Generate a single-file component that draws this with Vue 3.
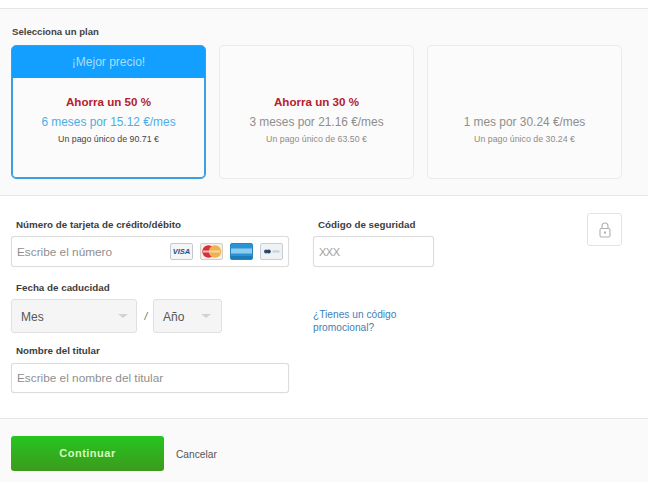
<script setup>
const plans = [
  { badge: '¡Mejor precio!', save: 'Ahorra un 50 %', price: '6 meses por 15.12 €/mes', once: 'Un pago único de 90.71 €', active: true },
  { badge: '', save: 'Ahorra un 30 %', price: '3 meses por 21.16 €/mes', once: 'Un pago único de 63.50 €', active: false },
  { badge: '', save: '', price: '1 mes por 30.24 €/mes', once: 'Un pago único de 30.24 €', active: false }
]
</script>

<template>
  <div class="page">
    <section class="plans">
      <h2 class="plans-title">Selecciona un plan</h2>
      <div class="plan-row">
        <article v-for="p in plans" :key="p.price" class="plan" :class="{ active: p.active }">
          <div class="plan-badge">{{ p.badge }}</div>
          <div class="plan-body">
            <div class="plan-save">{{ p.save }}</div>
            <div class="plan-price">{{ p.price }}</div>
            <div class="plan-once">{{ p.once }}</div>
          </div>
        </article>
      </div>
    </section>

    <section class="form">
      <div class="col-left">
        <label class="label">Número de tarjeta de crédito/débito</label>
        <div class="input card-input">
          <span class="ph">Escribe el número</span>
          <div class="cards">
            <svg class="cc" viewBox="0 0 23 17"><rect x=".5" y=".5" width="22" height="16" rx="1.5" fill="#f3f5f7" stroke="#c4c9ce"/><text x="11.5" y="11.2" text-anchor="middle" class="visa">VISA</text></svg>
            <svg class="cc" viewBox="0 0 23 17"><rect x=".5" y=".5" width="22" height="16" rx="1.5" fill="#f4efe8" stroke="#d2cdc6"/><circle cx="8.5" cy="8.5" r="6.2" fill="#d92f3c"/><circle cx="15" cy="8.5" r="6.2" fill="#efb24c"/><rect x="3" y="7.5" width="17" height="2" fill="#f6dccb" opacity=".85"/></svg>
            <svg class="cc" viewBox="0 0 23 17"><rect x=".5" y=".5" width="22" height="16" rx="1.5" fill="#2a94d6" stroke="#2a84bd"/><rect x="1" y="5.5" width="21" height="5" fill="#8fcdf0"/><rect x="1" y="13" width="21" height="3" fill="#1c7cb8"/></svg>
            <svg class="cc" viewBox="0 0 23 17"><rect x=".5" y=".5" width="22" height="16" rx="1.5" fill="#eff2f5" stroke="#c9ced3"/><circle cx="6" cy="8.5" r="2" fill="#2c4f78"/><circle cx="8.8" cy="8.5" r="2" fill="#26405f"/><rect x="12.5" y="7.4" width="7" height="2.2" fill="#c7cfd8"/></svg>
          </div>
        </div>
        <label class="label exp-label">Fecha de caducidad</label>
        <div class="exp-row">
          <div class="select month"><span>Mes</span><i class="caret"></i></div>
          <span class="slash">/</span>
          <div class="select year"><span>Año</span><i class="caret"></i></div>
        </div>
        <label class="label name-label">Nombre del titular</label>
        <div class="input name-input"><span class="ph">Escribe el nombre del titular</span></div>
      </div>
      <div class="col-mid">
        <label class="label">Código de seguridad</label>
        <div class="input cvv"><span class="ph xxx">XXX</span></div>
        <a class="promo">¿Tienes un código<br>promocional?</a>
      </div>
      <div class="lock">
        <svg width="12" height="16" viewBox="0 0 12 16" fill="none" stroke="#b0b0b0" stroke-width="1.1">
          <path d="M3 6.5V4a3 3 0 0 1 6 0v2.5"/>
          <rect x="1" y="6.5" width="10" height="8.5" rx="1.5"/>
          <path d="M6 9.5v2.2" stroke-width="1.8"/>
        </svg>
      </div>
    </section>

    <footer class="foot">
      <button class="go">Continuar</button>
      <a class="cancel">Cancelar</a>
    </footer>
  </div>
</template>

<style>
html, body { margin: 0; background: #fff; }
</style>

<style scoped>
.page { width: 648px; height: 490px; overflow: hidden; font-family: "Liberation Sans", Arial, sans-serif; background: #fff; padding-top: 8px; box-sizing: border-box; }
.plans { background: #fafafa; border-top: 1px solid #e6e6e6; border-bottom: 1px solid #e6e6e6; height: 188px; box-sizing: border-box; padding: 17px 26px 0 11px; }
.plans-title { margin: 0 0 8px 1px; font-size: 9.6px; line-height: 11px; font-weight: bold; color: #444; white-space: nowrap; }
.plan-row { display: flex; gap: 13px; }
.plan { flex: 1; height: 134px; box-sizing: border-box; border: 1px solid #ebebeb; border-radius: 5px; background: #fbfbfb; text-align: center; overflow: hidden; }
.plan-badge { height: 32px; line-height: 32px; font-size: 12px; color: #a9defc; }
.plan.active { border: 1px solid #3ba0de; box-shadow: inset 0 0 0 1px #3ba0de; }
.plan.active .plan-badge { background: #129fff; margin: -1px -1px 0; height: 33px; line-height: 34px; }
.plan-body { padding-top: 17px; }
.plan-save { height: 14px; line-height: 14px; font-size: 11.6px; font-weight: bold; color: #b5202c; }
.plan-price { margin-top: 6px; line-height: 14px; font-size: 11.9px; color: #8e8e8e; }
.plan.active .plan-price { color: #4aaee6; }
.plan-once { margin-top: 5px; line-height: 10px; font-size: 8.8px; color: #8c8c8c; }
.plan.active .plan-once { color: #444; }
.form { position: relative; height: 223px; box-sizing: border-box; border-bottom: 1px solid #e6e6e6; padding: 23px 0 0 11px; display: flex; gap: 24px; }
.col-left { width: 278px; }
.col-mid { width: 121px; }
.label { display: block; margin: 0 0 5px 5px; font-size: 9.8px; line-height: 12px; font-weight: bold; color: #3d3d3d; white-space: nowrap; }
.input { box-sizing: border-box; height: 31px; border: 1px solid #dcdcdc; border-radius: 3px; background: #fff; display: flex; align-items: center; padding-left: 5px; box-shadow: 0 0 1px #ddd; }
.ph { font-size: 11.8px; color: #8f8f8f; }
.xxx { font-size: 11px; color: #a0a0a0; letter-spacing: -.5px; }
.card-input { justify-content: space-between; padding-right: 5px; }
.cards { display: flex; gap: 7px; }
.cc { width: 23px; height: 17px; display: block; }
.visa { font: italic bold 7.5px "Liberation Sans", sans-serif; fill: #1f4f8f; }
.exp-label { margin-top: 15px; margin-bottom: 5px; }
.exp-row { display: flex; align-items: center; }
.select { box-sizing: border-box; height: 34px; border: 1px solid #e0e0e0; border-radius: 3px; background: #f5f5f5; display: flex; align-items: center; justify-content: space-between; font-size: 12px; color: #555; }
.select span { padding-top: 2px; }
.month { width: 126px; padding: 0 8px 0 9px; }
.year { width: 69px; padding: 0 10px 0 9px; }
.slash { width: 16px; padding-left: 2px; box-sizing: border-box; text-align: center; font-size: 10px; color: #666; font-style: italic; }
.caret { width: 0; height: 0; border-left: 5px solid transparent; border-right: 5px solid transparent; border-top: 4px solid #d2d2d2; }
.name-label { margin-top: 12px; margin-bottom: 6px; }
.name-input { height: 30px; }
.promo { display: block; margin-top: 42px; font-size: 10.2px; line-height: 12.5px; color: #3f80b8; }
.lock { position: absolute; left: 587px; top: 17px; width: 35px; height: 33px; box-sizing: border-box; border: 1px solid #e3e3e3; border-radius: 3px; display: flex; align-items: center; justify-content: center; }
.foot { background: #fafafa; height: 63px; box-sizing: border-box; padding: 17px 0 0 11px; display: flex; align-items: flex-start; }
.go { width: 153px; height: 35px; border: 0; border-radius: 3px; background: linear-gradient(#25c61f, #3d9a1d); color: #d3fbc0; font: bold 11px "Liberation Sans", sans-serif; letter-spacing: .5px; padding: 0 0 2px; }
.cancel { margin: 12px 0 0 12px; font-size: 10.2px; line-height: 13px; color: #555; }
</style>
